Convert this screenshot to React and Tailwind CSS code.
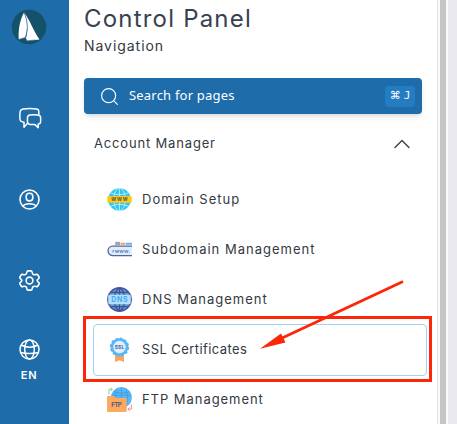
import { ChevronUp, Search } from "lucide-react";

function LogoIcon() {
  return (
    <svg width="36" height="36" viewBox="0 0 36 36">
      <circle cx="18" cy="18" r="17.3" fill="#14526a" />
      <path d="M13 3.500C8.500 12 7 22 7.800 30.500l6.500-2C17 20 16.500 11 13 3.500z" fill="#fff" />
      <path d="M13 3.500C19 11 22.500 22 28.500 30.500L16 32l-1-2.800C17.500 20 16.500 11 13 3.500z" fill="#fff" />
      <path d="M13 3.500C16.800 12 17.500 20 14.300 29l1.500 2.800 8.500-.8M7.800 30.500l6.500-2" fill="none" stroke="#43699b" strokeWidth=".7" />
    </svg>
  );
}

function ChatIcon() {
  return (
    <svg width="24" height="24" viewBox="0 0 24 24" fill="none" stroke="#fff" strokeWidth="1.500" strokeLinejoin="round" strokeLinecap="round">
      <path d="M20.800 8V5.200c0-1.300-.8-2.100-2-2.300-4.500-.6-9-.6-13.500 0-2 .3-3.100 1.400-3.300 3.300-.2 2.600-.2 4.800 0 7 .2 1.900 1.400 2.800 4 3v5l3.300-3.600" />
      <path d="M12 8.900c3-.3 5.200-.3 8 0 1.600.2 2.500 1 2.600 2.500.1 1.700.1 2.700 0 4.300-.1 1.500-.9 2.200-2.400 2.400v3.600l-3.600-3.300h-4.800c-1.500-.2-2.200-1-2.300-2.500-.1-1.600-.1-2.800 0-4.400.1-1.500 1-2.400 2.500-2.600z" />
    </svg>
  );
}

function UserIcon() {
  return (
    <svg width="21" height="21" viewBox="0.5 0.5 21 21" fill="none" stroke="#fff" strokeWidth="1.600">
      <circle cx="11" cy="11" r="9.500" />
      <rect x="7.700" y="4.800" width="6.600" height="7.600" rx="3.200" />
      <path d="M4.300 17.800c2.200-3.400 11.200-3.400 13.400 0" />
    </svg>
  );
}

function GearIcon() {
  return (
    <svg width="21" height="21" viewBox="0.5 0.5 21 21" fill="none" stroke="#fff" strokeWidth="1.600" strokeLinejoin="round">
      <path d="M9.600 1.400h2.800q1 0 1.200 1l.3 1.300q.2.900 1.100 1.300.8.500 1.700.2l1.200-.3q1-.3 1.500.6l1.100 1.800q.5.900-.2 1.600l-.9.900q-.7.600-.7 1.200t.7 1.200l.9.900q.7.700.2 1.600l-1.100 1.800q-.5.900-1.500.6l-1.200-.3q-.9-.3-1.700.2-.9.400-1.100 1.300l-.3 1.300q-.2 1-1.200 1H9.600q-1 0-1.200-1l-.3-1.300q-.2-.9-1.100-1.300-.8-.5-1.700-.2l-1.200.3q-1 .3-1.500-.6l-1.100-1.800q-.5-.9.200-1.600l.9-.9q.7-.6.700-1.200t-.7-1.200l-.9-.9q-.7-.7-.2-1.600l1.100-1.800q.5-.9 1.500-.6l1.200.3q.9.300 1.700-.2.900-.4 1.100-1.300l.3-1.300q.2-1 1.200-1z" />
      <circle cx="11" cy="11" r="3.400" />
    </svg>
  );
}

function GlobeIcon() {
  return (
    <svg width="21" height="21" viewBox="0.5 0.5 21 21" fill="none" stroke="#fff" strokeWidth="1.500">
      <circle cx="11" cy="11" r="9.500" />
      <ellipse cx="11" cy="11" rx="4.800" ry="9.500" />
      <path d="M2.500 6.500q8.500 4.400 17 0M1.800 14q9.200 2.200 18.400 0" />
    </svg>
  );
}

function DomainIcon() {
  return (
    <svg className="mb-px" width="25" height="25" viewBox="0 0 26 26">
      <circle cx="13" cy="13" r="11.800" fill="#35c5f1" />
      <g fill="none" stroke="#c2effb" strokeWidth=".9">
        <ellipse cx="13" cy="13" rx="6" ry="11.800" />
        <path d="M13 1.500v23M3.500 6q9.500 4 19 0M3.500 20q9.500-4 19 0" />
      </g>
      <rect x=".3" y="9.300" width="25.400" height="7" rx="1" fill="#fdc913" />
      <text x="13" y="15" textAnchor="middle" fontSize="6" fontWeight="700" textLength="17" fill="#625b55" className="font-['Inter',sans-serif]">www</text>
    </svg>
  );
}

function SubdomainIcon() {
  return (
    <svg className="mb-px" width="25" height="25" viewBox="0 0 26 26">
      <path d="M8.500 5h5v3.500h-5z" fill="#a2a4bc" />
      <path d="M14 6h5v2h-5z" fill="#f19a6c" />
      <path d="M19.500 6h6.500v2h-6.500z" fill="#58b4ee" />
      <path d="M26 9.500H6a4.900 4.900 0 0 0 0 9.800h20" fill="#dcefff" stroke="#5a629c" strokeWidth="1.400" />
      <path d="M5.500 16l1.600-2.400" fill="none" stroke="#5c6ba6" strokeWidth="1" />
      <text x="8" y="16.200" fontSize="5.500" fontWeight="700" textLength="16" fill="#7283b5" className="font-['Inter',sans-serif]">www.</text>
    </svg>
  );
}

function DnsIcon() {
  return (
    <svg className="mb-px" width="25" height="25" viewBox="0 0 26 26">
      <circle cx="13" cy="13" r="12.900" fill="#4c579c" />
      <circle cx="13" cy="13" r="11.200" fill="#58a0d8" />
      <g fill="none" stroke="#4a4f92" strokeWidth="1.300">
        <ellipse cx="13" cy="13" rx="5.500" ry="11.200" />
        <path d="M13 2v22M4 5.500h18M4 20.500h18" />
      </g>
      <rect x="1.300" y="8" width="23.400" height="10" rx="1.500" fill="#b4e0ff" />
      <text x="13" y="15.700" textAnchor="middle" fontSize="7.300" fontWeight="700" textLength="17" fill="#45a9ed" className="font-['Inter',sans-serif]">DNS</text>
    </svg>
  );
}

function SslIcon() {
  return (
    <svg className="mb-px" width="25" height="25" viewBox="0 0 26 26">
      <path d="M8.300 17h9.400v9L13 24.200l-4.700 1.800z" fill="#faa55b" />
      <circle cx="13" cy="10.500" r="9.200" fill="#58b6f6" stroke="#58b6f6" strokeWidth="1.600" strokeDasharray="2.800 2.017" />
      <circle cx="13" cy="10.500" r="8.800" fill="#58b6f6" />
      <circle cx="13" cy="10.500" r="6.500" fill="#dff0fd" />
      <text x="13" y="12.500" textAnchor="middle" fontSize="5.300" fontWeight="700" textLength="10" fill="#47619d" className="font-['Inter',sans-serif]">SSL</text>
    </svg>
  );
}

function FtpIcon() {
  return (
    <svg className="mb-px" width="25" height="25" viewBox="0 0 26 26">
      <circle cx="15" cy="11" r="10.900" fill="#58b6f6" />
      <path d="M15 .5v20M4.500 8.500h20M10 2q-3 7 0 14M20 2q3 8 0 18M6 5q9 3 18 0" fill="none" stroke="#4299df" strokeWidth=".8" />
      <path d="M0 10.500q0-1.200 1.200-1.200h6.300l2 2.200h9.800q1.200 0 1.200 1.200v12q0 1.300-1.200 1.300H1.200Q0 26 0 24.700z" fill="#fbaa60" />
      <path d="M2 8V2.500h3M3.700.8L5.700 2.500 3.700 4.200" fill="none" stroke="#91c995" strokeWidth="1" />
      <path d="M25.300 18v5h-3M23.500 21.300L21.700 23l1.800 1.700" fill="none" stroke="#e98a91" strokeWidth="1" />
      <text x="10" y="20.500" textAnchor="middle" fontSize="6.500" fontWeight="700" textLength="11" fill="#5e5878" className="font-['Inter',sans-serif]">FTP</text>
    </svg>
  );
}

const items = [
  { label: "Domain Setup", icon: DomainIcon, tracking: "tracking-[1px]" },
  { label: "Subdomain Management", icon: SubdomainIcon, tracking: "tracking-[1px]" },
  { label: "DNS Management", icon: DnsIcon, tracking: "tracking-[1px]" },
  { label: "SSL Certificates", icon: SslIcon, tracking: "tracking-[0.42px]", active: true },
  { label: "FTP Management", icon: FtpIcon, tracking: "tracking-[0.95px]" },
];

function Sidebar() {
  return (
    <aside className="flex w-[69px] shrink-0 flex-col items-center bg-[#1e6ca9] pr-2.5 pt-[9px] text-white">
      <div className="pr-px">
        <LogoIcon />
      </div>
      <div className="mt-[61px] pl-px">
        <ChatIcon />
      </div>
      <div className="mt-[59px]">
        <UserIcon />
      </div>
      <div className="mt-[60px]">
        <GearIcon />
      </div>
      <div className="mt-12">
        <GlobeIcon />
      </div>
      <span className="mt-2 pr-px text-[11px] font-semibold leading-[14px] tracking-[0.8px]">EN</span>
    </aside>
  );
}

function NavItem({ item }) {
  const Icon = item.icon;
  return (
    <li
      className={`flex items-center rounded border pl-[13px] ${
        item.active ? "-my-px h-[52px] border-[#9fd3f5]" : "h-[50px] border-transparent"
      }`}
    >
      <Icon />
      <span className={`ml-2.5 whitespace-nowrap text-[13px] ${item.tracking}`}>{item.label}</span>
    </li>
  );
}

export default function App() {
  return (
    <div className="relative flex h-[424px] w-[457px] overflow-hidden bg-white font-['Inter',sans-serif] text-[#343942]">
      <Sidebar />

      <main className="w-[368px] shrink-0 pl-[15px] pr-[10px] pt-[3px]">
        <div className="w-[338px]">
          <h1 className="whitespace-nowrap text-2xl leading-8 tracking-[1.2px] text-[#374250]">Control Panel</h1>
          <p className="whitespace-nowrap text-sm leading-[22px] tracking-[0.95px]">Navigation</p>

          <div className="mt-[21px] flex h-9 items-center rounded bg-[#1e6ca9] pl-[15px] pr-[7px] text-white shadow-md">
            <Search size={21} strokeWidth={1.3} />
            <span className="ml-[9px] font-['Noto_Sans',sans-serif] text-[13px] tracking-[0.2px]">Search for pages</span>
            <kbd className="ml-auto flex h-[21px] w-[30px] items-center justify-center gap-[3px] rounded-[3px] bg-[#247dc2] text-[11px]">
              <span className="font-['DejaVu_Sans',sans-serif]">⌘</span>
              <span className="font-['DejaVu_Sans_Mono',monospace]">J</span>
            </kbd>
          </div>

          <div className="mb-px flex h-[60px] items-center justify-between pl-2.5 pr-1.5">
            <span className="whitespace-nowrap text-[13px] tracking-[0.83px]">Account Manager</span>
            <ChevronUp size={28} strokeWidth={1.1} />
          </div>
        </div>

        <ul className="ml-[9px] w-[334px]">
          {items.map((item) => (
            <NavItem key={item.label} item={item} />
          ))}
        </ul>
      </main>

      {/* scrollbar and page edge */}
      <div className="flex grow border-l border-[#e2e2e4] bg-[#fafafa] pl-[2px]">
        <div className="w-1.5 bg-[#c6c6c6]" />
        <div className="ml-[2px] grow bg-[#e9e9ee]" />
      </div>

      {/* highlight */}
      <div className="absolute left-[83px] top-[316px] h-[66px] w-[349px] border-[3px] border-[#fc2609]" />
      <svg className="absolute left-[255px] top-[275px]" width="155" height="80" viewBox="0 0 155 80">
        <path d="M147 7L25 64" stroke="#fc2609" strokeWidth="2.800" strokeLinecap="round" />
        <path d="M5 73.800L26 58.500l4.500 9z" fill="#fc2609" />
      </svg>
    </div>
  );
}
